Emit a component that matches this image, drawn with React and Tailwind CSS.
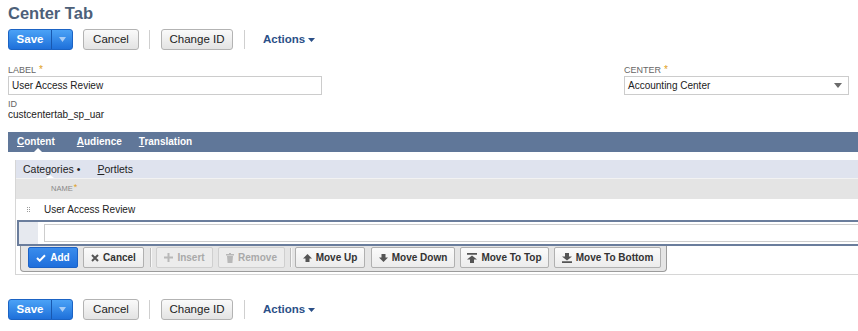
import React from 'react'

function Caret({ color = '#2a4f87' }) {
  return (
    <svg width="7" height="4" viewBox="0 0 7 4" className="ml-[3px] mt-[1px]">
      <path d="M0 0h7L3.5 4z" fill={color} />
    </svg>
  )
}

function SaveButton() {
  return (
    <div className="flex h-[21px] rounded-[3px] border border-[#1b63c4] bg-linear-to-b from-[#4ba2f6] to-[#1e70da] text-white">
      <button className="w-[42px] text-[11.5px] font-bold leading-none">Save</button>
      <span className="w-px bg-[#1858b0]" />
      <span className="flex w-[20px] items-center justify-center">
        <svg width="7" height="5" viewBox="0 0 7 5">
          <path d="M0 0h7L3.5 5z" fill="#a9cdf6" />
        </svg>
      </span>
    </div>
  )
}

function GrayButton({ children, className }) {
  return (
    <button
      className={`h-[21px] ${className} rounded-[3px] border border-[#b3b3b3] bg-linear-to-b from-[#fafafa] to-[#e3e3e3] text-[11.5px] leading-none text-[#222]`}
    >
      {children}
    </button>
  )
}

function Sep({ className }) {
  return <span className={`h-[19px] w-px bg-[#cfcfcf] ${className}`} />
}

function ActionRow() {
  return (
    <div className="flex h-[21px] items-center">
      <SaveButton />
      <GrayButton className="ml-[10px] w-[56px]">Cancel</GrayButton>
      <Sep className="ml-[10px]" />
      <GrayButton className="ml-[11px] w-[72px]">Change ID</GrayButton>
      <Sep className="ml-[11px]" />
      <span className="ml-[18px] flex items-center text-[11.5px] font-bold leading-none text-[#2a4f87]">
        Actions
        <Caret />
      </span>
    </div>
  )
}

function FieldLabel({ children }) {
  return (
    <div className="flex h-[10px] items-center text-[9px] leading-[10px] text-[#666]">
      {children}
      <span className="ml-[3px] text-[10px] leading-[10px] text-[#e0a020]">*</span>
    </div>
  )
}

function Icon({ name, color }) {
  const c = color
  if (name === 'check')
    return (
      <svg width="10" height="8" viewBox="0 0 10 8">
        <path d="M1 4l2.7 2.7L9 1.3" stroke={c} strokeWidth="2" fill="none" />
      </svg>
    )
  if (name === 'x')
    return (
      <svg width="8" height="8" viewBox="0 0 8 8">
        <path d="M1 1l6 6M7 1L1 7" stroke={c} strokeWidth="2" />
      </svg>
    )
  if (name === 'plus')
    return (
      <svg width="9" height="9" viewBox="0 0 9 9">
        <path d="M4.5 0v9M0 4.5h9" stroke={c} strokeWidth="2" />
      </svg>
    )
  if (name === 'trash')
    return (
      <svg width="8" height="10" viewBox="0 0 8 10">
        <path d="M0 1h8v1.5H0zM3 0h2v1H3zM1 3h6l-.6 7H1.6z" fill={c} />
      </svg>
    )
  if (name === 'up')
    return (
      <svg width="9" height="8" viewBox="0 0 9 8">
        <path d="M4.5 0L9 4.5H6.5V8h-4V4.5H0z" fill={c} />
      </svg>
    )
  if (name === 'down')
    return (
      <svg width="9" height="8" viewBox="0 0 9 8">
        <path d="M2.5 0h4v3.5H9L4.5 8 0 3.5h2.5z" fill={c} />
      </svg>
    )
  if (name === 'top')
    return (
      <svg width="10" height="10" viewBox="0 0 10 10">
        <path d="M0 0h10v1.8H0zM5 2.5l5 4H7V10H3V6.5H0z" fill={c} />
      </svg>
    )
  return (
    <svg width="10" height="10" viewBox="0 0 10 10">
      <path d="M3 0h4v3.5h3l-5 4-5-4h3zM0 8.2h10V10H0z" fill={c} />
    </svg>
  )
}

function ToolButton({ label, icon, w, ml, kind = 'normal' }) {
  const styles = {
    primary: 'border-[#1c62c6] bg-linear-to-b from-[#3a8cec] to-[#1f6fdc] text-white',
    normal: 'border-[#b0b0b0] bg-linear-to-b from-[#fbfbfb] to-[#ececec] text-[#333]',
    disabled: 'border-[#cfcfcf] bg-[#ececec] text-[#a9a9a9]',
  }
  const iconColor = kind === 'primary' ? '#fff' : kind === 'disabled' ? '#b8b8b8' : '#555'
  return (
    <button
      className={`flex h-[21px] ${w} ${ml} items-center justify-center gap-[4px] rounded-[2px] border text-[10px] font-bold leading-none ${styles[kind]}`}
    >
      <Icon name={icon} color={iconColor} />
      {label}
    </button>
  )
}

function ToolSep({ ml }) {
  return (
    <span className={`${ml} mt-[1px] flex h-[19px]`}>
      <span className="w-px bg-[#bdbdbd]" />
      <span className="w-px bg-[#f7f7f7]" />
    </span>
  )
}

function Categories() {
  return (
    <div className="ml-[7px] mt-[8px] border-b border-l border-[#d6d6d6] pb-[2px]">
      <div className="relative flex h-[18px] items-center bg-[#dfe3ee] pl-[7px] text-[10.5px] leading-none text-[#222]">
        <span>
          Cate<span className="underline">g</span>ories •
        </span>
        <span className="ml-[17px]">
          <span className="underline">P</span>ortlets
        </span>
        <span className="absolute bottom-0 left-[30px] h-0 w-0 border-x-[4px] border-b-[3px] border-x-transparent border-b-white" />
      </div>
      <div className="h-px bg-[#f2f2f2]" />
      <div className="flex h-[20px] items-center bg-[#e4e4e4] pl-[35px] text-[7.5px] leading-none text-[#888]">
        NAME
        <span className="-mt-[3px] ml-[1px] text-[9px] text-[#e0a020]">*</span>
      </div>
      <div className="flex h-[21px] items-center bg-white text-[10px] leading-none text-[#222]">
        <span className="ml-[11px] grid grid-cols-2 gap-x-[1px] gap-y-[1px]">
          {[0, 1, 2, 3, 4, 5].map((i) => (
            <span key={i} className="h-px w-px bg-[#9a9a9a]" />
          ))}
        </span>
        <span className="ml-[14px]">User Access Review</span>
      </div>
      <div className="ml-[1px] flex h-[26px] border-y-2 border-l-2 border-[#6a7d9c]">
        <div className="w-[19px] bg-[#e6e9ef]" />
        <div className="flex flex-1 items-center pl-[6px]">
          <div className="h-[18px] w-full border border-[#cdcdcd] bg-white" />
        </div>
      </div>
      <div className="ml-[4px] flex h-[26px] w-[647px] items-start rounded-b-[4px] border border-t-0 border-[#9c9c9c] bg-[#e5e5e5] pl-[7px] pt-[1px]">
        <ToolButton label="Add" icon="check" w="w-[50px]" ml="" kind="primary" />
        <ToolButton label="Cancel" icon="x" w="w-[61px]" ml="ml-[5px]" />
        <ToolSep ml="ml-[6px]" />
        <ToolButton label="Insert" icon="plus" w="w-[57px]" ml="ml-[4px]" kind="disabled" />
        <ToolButton label="Remove" icon="trash" w="w-[67px]" ml="ml-[5px]" kind="disabled" />
        <ToolSep ml="ml-[5px]" />
        <ToolButton label="Move Up" icon="up" w="w-[70px]" ml="ml-[3px]" />
        <ToolButton label="Move Down" icon="down" w="w-[84px]" ml="ml-[6px]" />
        <ToolButton label="Move To Top" icon="top" w="w-[89px]" ml="ml-[5px]" />
        <ToolButton label="Move To Bottom" icon="bottom" w="w-[107px]" ml="ml-[5px]" />
      </div>
    </div>
  )
}

export default function App() {
  return (
    <div className="h-[331px] w-[858px] overflow-hidden bg-white font-['Liberation_Sans',Arial,sans-serif]">
      <div className="w-[1000px] pl-[8px]">
        <h1 className="mt-[3px] text-[16.5px] font-bold leading-[20px] text-[#4d5f79]">Center Tab</h1>
        <div className="mt-[6px]">
          <ActionRow />
        </div>

        <div className="mt-[15px] flex">
          <div className="w-[314px]">
            <FieldLabel>LABEL</FieldLabel>
            <div className="mt-[1px] flex h-[19px] items-center border border-[#cccccc] px-[3px] text-[10px] text-[#222]">
              User Access Review
            </div>
            <div className="mt-[4px] text-[9px] leading-[10px] text-[#666]">ID</div>
            <div className="text-[10px] leading-[11px] text-[#222]">custcentertab_sp_uar</div>
          </div>
          <div className="ml-[302px] w-[225px]">
            <FieldLabel>CENTER</FieldLabel>
            <div className="mt-[1px] flex h-[19px] items-center justify-between border border-[#cccccc] pl-[3px] pr-[6px] text-[10px] text-[#222]">
              Accounting Center
              <svg width="8" height="5" viewBox="0 0 8 5">
                <path d="M0 0h8L4 5z" fill="#6b6b6b" />
              </svg>
            </div>
          </div>
        </div>

        <div className="relative mt-[12px] flex h-[20px] items-center bg-[#607799] pl-[9px] text-[10px] font-bold leading-none text-white">
          <span>
            <span className="underline">C</span>ontent
          </span>
          <span className="ml-[22px]">
            <span className="underline">A</span>udience
          </span>
          <span className="ml-[17px]">
            <span className="underline">T</span>ranslation
          </span>
          <span className="absolute bottom-0 left-[26px] h-0 w-0 border-x-[4px] border-b-[4px] border-x-transparent border-b-white" />
        </div>

        <Categories />

        <div className="mt-[24px]">
          <ActionRow />
        </div>
      </div>
    </div>
  )
}
